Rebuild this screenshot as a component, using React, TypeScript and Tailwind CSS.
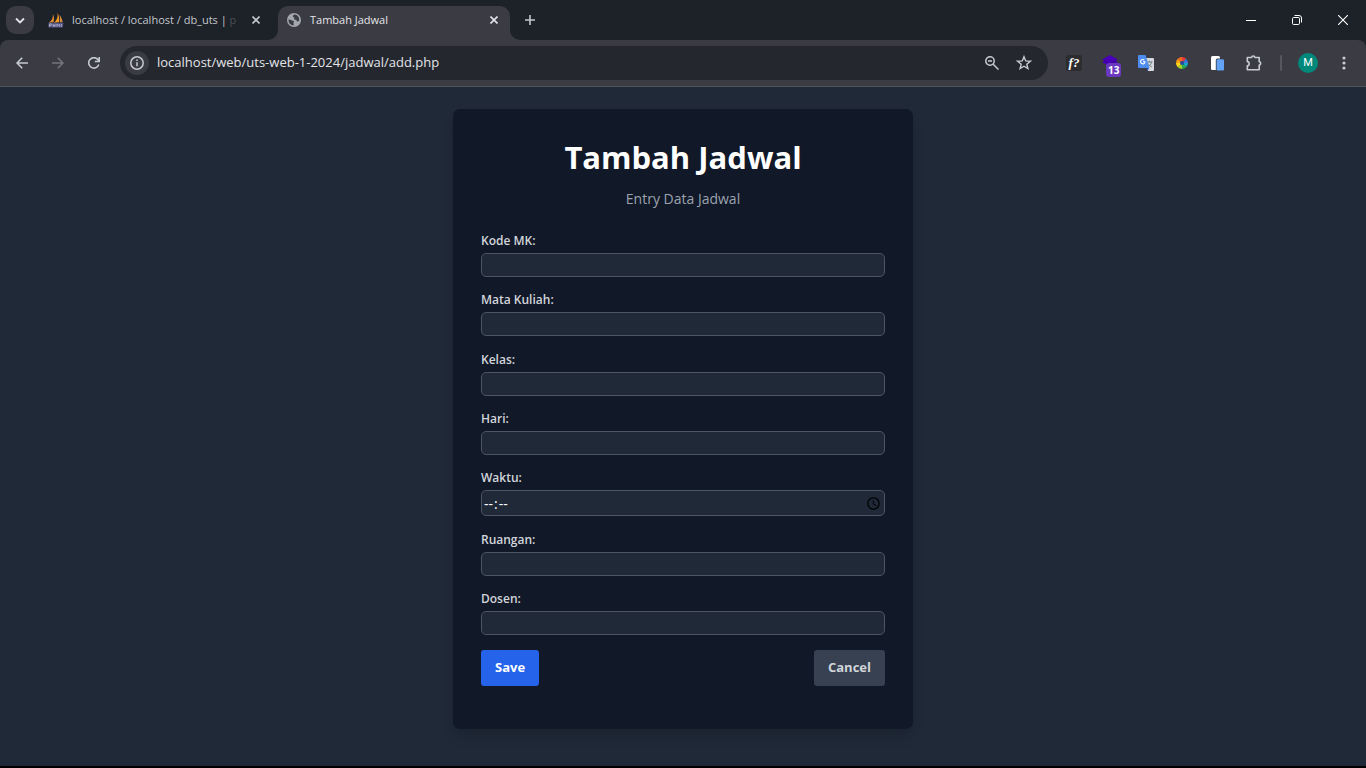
import type { ReactNode } from "react";

const fields = [
  { id: "kode_mk", label: "Kode MK:" },
  { id: "mata_kuliah", label: "Mata Kuliah:" },
  { id: "kelas", label: "Kelas:" },
  { id: "hari", label: "Hari:" },
  { id: "waktu", label: "Waktu:", time: true },
  { id: "ruangan", label: "Ruangan:" },
  { id: "dosen", label: "Dosen:" },
];

function IconButton({ label, children, className = "" }: { label: string; children: ReactNode; className?: string }) {
  return (
    <button type="button" aria-label={label} className={`flex shrink-0 items-center justify-center ${className}`}>
      {children}
    </button>
  );
}

function CloseIcon({ className }: { className: string }) {
  return (
    <svg width="8" height="8" viewBox="0 0 8 8" className={className} fill="none" stroke="currentColor" strokeWidth="1.6">
      <path d="M0.5 0.5l7 7M7.5 0.5l-7 7" />
    </svg>
  );
}

function SailboatIcon() {
  return (
    <svg width="16" height="16" viewBox="0 0 17 16" className="shrink-0">
      <path d="M5.2 1.500C5.600 5 4.300 8.700 0.800 11l5-.5C6.700 7.500 6.500 4 5.200 1.500z" fill="#e8912d" />
      <path d="M9.800 0c1.200 4 .2 8-3.600 10.800l5.500-.4C12.300 6.600 11.700 3 9.800 0z" fill="#f59a23" />
      <path d="M12.200 2.400c2 2.600 3 5.300 3.500 8l-3.300.1c.5-2.700.5-5.400-.2-8.100z" fill="#d08c45" />
      <path d="M0.500 11h16l-1 5H.5z" fill="#4f5280" />
      <path d="M1.500 15.500v-3.300h2v1.600h-2M5.500 15.500v-3.300M5.500 13.800h2M7.500 15.500v-3.300M9.500 15.500v-3.300l1.500 2 1.500-2v3.300M14.500 15.500v-3.300" fill="none" stroke="#b9b9d4" strokeWidth=".8" />
    </svg>
  );
}

function GlobeIcon() {
  return (
    <svg width="14" height="14" viewBox="0 0 14 14" className="shrink-0">
      <circle cx="7" cy="7" r="7" fill="#a3a6ad" />
      <path d="M1.700 6.200l3.400 1.400c.7.300 1.500.2 1.800 1 .2.700-.5 1-.4 1.700l.3 2c-3 0-5.200-2.200-5.300-5.100zM7.200 1.600c-.6.500-1.400 1-1.300 1.800.1.700 1 .6 1.400 1.200.4.700-.5 1.200 0 1.800.5.500 1.300 0 1.900.4.600.5.300 1.300 1 1.600.7.200 1.300-.2 1.900-.7.700-3-1.400-5.900-4.900-6.100z" fill="#3b3c44" />
    </svg>
  );
}

function TabStrip() {
  return (
    <header className="flex h-10 bg-[#1d2128] pl-1.5 pt-1.5 text-[11px] text-[#c3c6cc]">
      <IconButton label="Search tabs" className="size-7 rounded-[10px] bg-[#3a3b43] text-[#e3e4e8]">
        <svg width="10" height="7" viewBox="0 0 10 7" fill="none" stroke="currentColor" strokeWidth="1.8">
          <path d="M1 1.500l4 4 4-4" />
        </svg>
      </IconButton>
      <div className="ml-3.5 flex h-7 w-[216px] items-center">
        <SailboatIcon />
        <span className="ml-2 flex-1 whitespace-nowrap">
          localhost / localhost / db_uts | <span className="text-[#4b4e55]">p</span>
        </span>
        <IconButton label="Close tab localhost" className="size-4">
          <CloseIcon className="text-[#c3c6cc]" />
        </IconButton>
      </div>
      <div className="relative ml-3.5 flex h-[34px] w-[232px] items-center rounded-t-[10px] bg-[#3a3b43] pb-1.5 pl-[9px] pr-2 text-[#e3e4e8]">
        <svg width="10" height="10" viewBox="0 0 10 10" className="absolute -left-[10px] bottom-0" fill="#3a3b43">
          <path d="M10 0v10H0A10 10 0 0 0 10 0z" />
        </svg>
        <svg width="10" height="10" viewBox="0 0 10 10" className="absolute -right-[10px] bottom-0" fill="#3a3b43">
          <path d="M0 0v10h10A10 10 0 0 1 0 0z" />
        </svg>
        <GlobeIcon />
        <span className="ml-[9px] flex-1 whitespace-nowrap">Tambah Jadwal</span>
        <IconButton label="Close tab Tambah Jadwal" className="size-4">
          <CloseIcon className="text-[#e3e4e8]" />
        </IconButton>
      </div>
      <IconButton label="New tab" className="ml-1.5 size-7 text-[#c3c6cc]">
        <svg width="10" height="10" viewBox="0 0 10 10" stroke="currentColor" strokeWidth="1.600">
          <path d="M5 0v10M0 5h10" />
        </svg>
      </IconButton>
      <div className="ml-auto flex h-7 text-white">
        <IconButton label="Minimize" className="w-[46px]">
          <svg width="10" height="10" viewBox="0 0 10 10" stroke="currentColor">
            <path d="M0 5.500h10" />
          </svg>
        </IconButton>
        <IconButton label="Restore" className="w-[46px]">
          <svg width="10" height="10" viewBox="0 0 10 10" fill="none" stroke="currentColor">
            <rect x=".5" y="2.500" width="7" height="7" rx="1.200" />
            <path d="M2.500.5H7A2.500 2.500 0 0 1 9.500 3v4.500" />
          </svg>
        </IconButton>
        <IconButton label="Close window" className="w-[46px]">
          <svg width="10" height="10" viewBox="0 0 10 10" stroke="currentColor" strokeWidth="1.100">
            <path d="M0 0l10 10M10 0L0 10" />
          </svg>
        </IconButton>
      </div>
    </header>
  );
}

function Toolbar() {
  return (
    <div className="bg-[#1d2128]">
      <nav className="flex h-[47px] items-center rounded-t-[8px] border-b border-[#51525a] bg-[#3a3b43] pl-2 pr-2">
        <IconButton label="Back" className="size-7 text-[#c7cad1]">
          <svg width="12" height="12" viewBox="0 0 12 12" fill="none" stroke="currentColor" strokeWidth="1.600">
            <path d="M12 6H1.200M6.200.7L1 6l5.200 5.300" />
          </svg>
        </IconButton>
        <IconButton label="Forward" className="ml-2 size-7 text-[#74757c]">
          <svg width="12" height="12" viewBox="0 0 12 12" fill="none" stroke="currentColor" strokeWidth="1.600">
            <path d="M0 6h10.800M5.800.7L11 6l-5.200 5.300" />
          </svg>
        </IconButton>
        <IconButton label="Reload" className="ml-2 size-7 text-[#c7cad1]">
          <svg width="12" height="12" viewBox="0 0 12 12" fill="none" stroke="currentColor" strokeWidth="1.600">
            <path d="M10.800 7.500A5.200 5.200 0 1 1 10 2.700l1 1.300M11.200 0v4.500H6.800" />
          </svg>
        </IconButton>
        <div className="ml-3 flex h-[34px] flex-1 items-center rounded-full bg-[#24272e] pl-[5px] pr-2.5 text-[#c7cad1]">
          <IconButton label="View site information" className="size-6 rounded-full bg-[#3a3b43]">
            <svg width="14" height="14" viewBox="0 0 14 14" fill="none" stroke="currentColor" strokeWidth="1.500">
              <circle cx="7" cy="7" r="6.200" />
              <path d="M7 6.200v4M7 3.600v1.500" />
            </svg>
          </IconButton>
          <input
            aria-label="Address"
            defaultValue="localhost/web/uts-web-1-2024/jadwal/add.php"
            className="ml-2 min-w-0 flex-1 bg-transparent text-[13px] text-[#e3e4e8] outline-none"
          />
          <IconButton label="Zoom" className="size-7">
            <svg width="14" height="14" viewBox="0 0 14 14" fill="none" stroke="currentColor" strokeWidth="1.500">
              <circle cx="5" cy="5" r="4.200" />
              <path d="M8.200 8.200l5.300 5.300M3 5h4" />
            </svg>
          </IconButton>
          <IconButton label="Bookmark this tab" className="ml-1 size-7">
            <svg width="16" height="16" viewBox="0 0 16 16" fill="none" stroke="currentColor" strokeWidth="1.400">
              <path d="M8 1.700l1.700 4.200 4.600.3-3.500 3 1.100 4.400L8 11.200l-3.900 2.400 1.100-4.400-3.500-3 4.600-.3z" />
            </svg>
          </IconButton>
        </div>
        <div className="ml-3 flex items-center gap-2">
          <IconButton label="Font finder" className="size-7">
            <span className="flex size-4 items-center justify-center rounded-[2px] bg-[#2d2d2f] font-['Liberation_Serif',serif] text-[13px] font-bold italic leading-4 text-white">
              f?
            </span>
          </IconButton>
          <IconButton label="Layers extension, 13 notices" className="relative size-7">
            <svg width="16" height="16" viewBox="0 0 16 16">
              <path d="M8 0l7.800 4.400-2 1.300 2 1.500L8 11.500.2 7.200l2-1.500-2-1.300z" fill="#4a00b8" />
              <path d="M2.200 5.700L8 9l5.800-3.300" fill="none" stroke="#34008a" />
            </svg>
            <span className="absolute left-2.5 top-3.5 rounded-[3px] bg-[#6b38c0] px-0.5 text-[10px] font-bold leading-[14px] text-white">
              13
            </span>
          </IconButton>
          <IconButton label="Translate" className="size-7">
            <svg width="16" height="16" viewBox="0 0 16 16">
              <path d="M6.500 3H15a1 1 0 0 1 1 1v11a1 1 0 0 1-1 1H10z" fill="#d5d8dc" />
              <path d="M9 7h5.500M11.700 5.800V7M13.600 7c-.5 2.200-2 4-3.800 5M10 8.500c.7 1.500 2 2.700 3.800 3.400" fill="none" stroke="#6b7f86" />
              <path d="M8.500 13H11l-1.300 3z" fill="#2a56c6" />
              <path d="M1 0h6.500l4 13H1a1 1 0 0 1-1-1V1a1 1 0 0 1 1-1z" fill="#4d8cf0" />
              <path d="M6.300 5.100A2.200 2.200 0 1 0 7 6.800H4.900" fill="none" stroke="#fff" strokeWidth="1.100" />
            </svg>
          </IconButton>
          <IconButton label="Color picker" className="size-7">
            <svg width="12" height="12" viewBox="0 0 12 12">
              <path d="M6 6V0a6 6 0 0 1 4.200 1.800z" fill="#e83a36" />
              <path d="M6 6l4.200-4.200A6 6 0 0 1 12 6z" fill="#3d78d8" />
              <path d="M6 6h6a6 6 0 0 1-1.800 4.200z" fill="#16a6c9" />
              <path d="M6 6l4.200 4.200A6 6 0 0 1 6 12z" fill="#27ad4c" />
              <path d="M6 6v6a6 6 0 0 1-4.200-1.800z" fill="#a3cf2f" />
              <path d="M6 6l-4.200 4.200A6 6 0 0 1 0 6z" fill="#ffd91a" />
              <path d="M6 6H0a6 6 0 0 1 1.800-4.200z" fill="#ffa012" />
              <path d="M6 6L1.800 1.800A6 6 0 0 1 6 0z" fill="#f36a20" />
              <circle cx="6" cy="6" r="2" fill="#26489d" />
            </svg>
          </IconButton>
          <IconButton label="Copy extension" className="size-7">
            <svg width="14" height="15" viewBox="0 0 14 15">
              <rect width="9" height="14" rx="1.500" fill="#fff" />
              <rect x="4.800" y="2.500" width="8.200" height="12.500" rx="1.500" fill="#3a3b43" />
              <rect x="5.600" y="3.200" width="7.400" height="11.300" rx="1.200" fill="#62a2f7" />
            </svg>
          </IconButton>
          <IconButton label="Extensions" className="size-7 text-[#c7cad1]">
            <svg width="16" height="16" viewBox="0 0 16 16" fill="none" stroke="currentColor" strokeWidth="1.600">
              <path d="M1.300 2.500h4.400C5.700.4 8.800.4 8.800 2.500h4.400v4.300c2 0 2 3.300 0 3.300v4.600H1.300v-3.900c2.500-.2 2.500-4 0-4.200z" strokeLinejoin="round" />
            </svg>
          </IconButton>
        </div>
        <div className="ml-3 h-4 w-0.5 rounded-full bg-[#56575e]" />
        <IconButton label="Profile" className="ml-4 size-5 rounded-full bg-[#00897b] font-[Roboto,sans-serif] text-[11px] text-white">
          M
        </IconButton>
        <IconButton label="Menu" className="ml-3 size-7 text-[#c7cad1]">
          <svg width="4" height="14" viewBox="0 0 4 14" fill="currentColor">
            <circle cx="2" cy="2" r="1.600" />
            <circle cx="2" cy="7" r="1.600" />
            <circle cx="2" cy="12" r="1.600" />
          </svg>
        </IconButton>
      </nav>
    </div>
  );
}

function JadwalForm() {
  return (
    <main className="flex flex-1 items-start justify-center bg-[#1f2937] pb-[37px] pt-[22px]">
      <div className="w-full max-w-[460px] rounded-[7px] bg-[#111827] px-7 pb-[43px] pt-7 shadow-lg">
        <h1 className="text-center text-[31px] font-bold leading-10 text-white">Tambah Jadwal</h1>
        <p className="mt-3 text-center text-[14px] leading-5 text-[#9ca3af]">Entry Data Jadwal</p>
        <form className="mt-[22px]" onSubmit={(event) => event.preventDefault()}>
          <div className="flex min-h-[404px] flex-col justify-between">
            {fields.map((field) => (
              <div key={field.id}>
                <label htmlFor={field.id} className="block text-[12px] font-semibold leading-5 text-[#d1d5db]">
                  {field.label}
                </label>
                {field.time ? (
                  <input
                    id={field.id}
                    name={field.id}
                    type="time"
                    className="mt-0.5 block h-[26px] w-full rounded-[5px] border border-[#4b5563] bg-[#1f2937] pl-px text-[14px] text-white [&::-webkit-datetime-edit-ampm-field]:hidden"
                  />
                ) : (
                  <input
                    id={field.id}
                    name={field.id}
                    type="text"
                    className="mt-0.5 block h-6 w-full rounded-[5px] border border-[#4b5563] bg-[#1f2937] px-px text-[14px] text-white"
                  />
                )}
              </div>
            ))}
          </div>
          <div className="mt-[15px] flex justify-between text-[13px] font-bold">
            <button type="submit" className="h-9 rounded-[3px] bg-[#2563eb] px-3.5 text-white">
              Save
            </button>
            <a href="#" className="flex h-9 items-center rounded-[3px] bg-[#374151] px-3.5 text-[#d1d5db]">
              Cancel
            </a>
          </div>
        </form>
      </div>
    </main>
  );
}

export default function App() {
  return (
    <div className="flex min-h-screen flex-col border-b-2 border-black bg-[#1f2937] font-['Open_Sans','Noto_Sans',sans-serif]">
      <TabStrip />
      <Toolbar />
      <JadwalForm />
    </div>
  );
}
